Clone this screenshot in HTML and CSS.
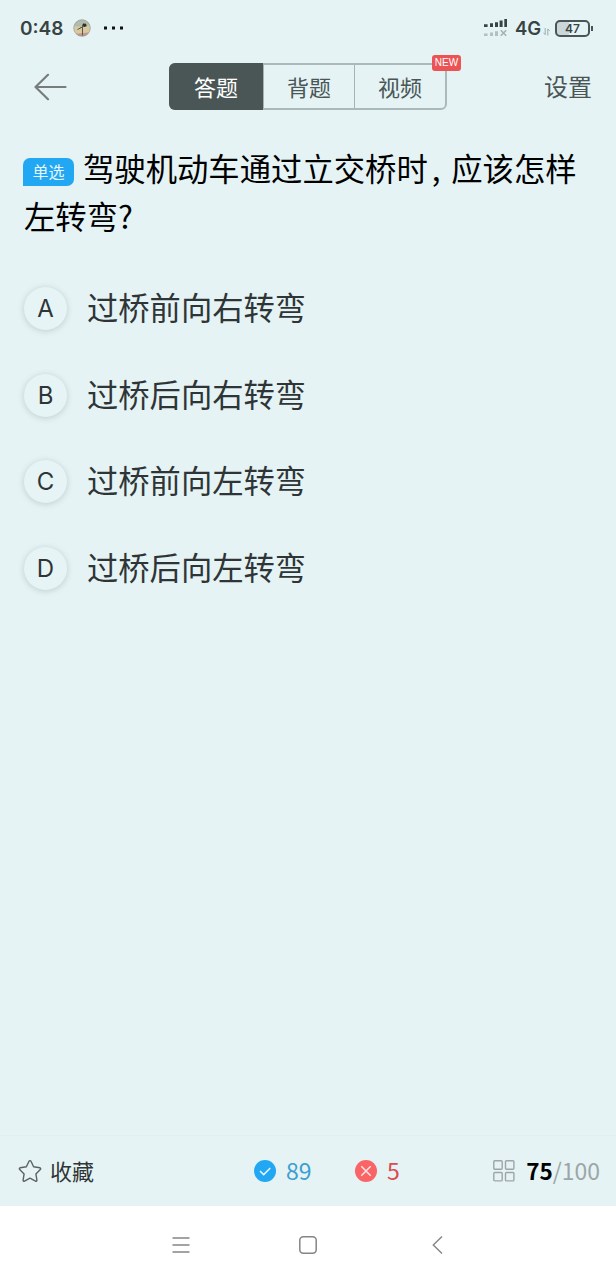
FILE: index.html
```html
<!DOCTYPE html>
<html lang="zh-CN">
<head>
  <meta charset="UTF-8">
  <meta name="viewport" content="width=device-width, initial-scale=1.0">
  <title>答题</title>
  <link rel="stylesheet" href="styles.css">
</head>
<body>
  <div class="status-bar">
    <span class="time">0:48</span>
    <svg class="avatar" width="18" height="18" viewBox="0 0 18 18">
      <circle cx="9" cy="9" r="8.3" fill="#d6c8a0"/>
      <path d="M1 7A8.3 8.3 0 0 1 16.6 6L10 8Z" fill="#aebcae"/>
      <path d="M3 14.8A8.3 8.3 0 0 0 16 13.5L10 14Z" fill="#c09a91"/>
      <path d="M10 4.5l3 .2.6 2.6-2.3.8-2.1-1.2z" fill="#302f2b"/>
      <path d="M9.5 7v9.5M7 9l3-1M4.5 10.5l3-1.5" stroke="#66543e" stroke-width="1" fill="none"/>
      <circle cx="9" cy="9" r="8.3" fill="none" stroke="#8b9188" stroke-width=".6"/>
    </svg>
    <svg class="more" width="22" height="4" viewBox="0 0 22 4">
      <path d="M1 .6h3v3H1zM9 .6h3v3H9zM17 .6h3v3h-3z" fill="#111"/>
    </svg>
    <svg class="signal" width="24" height="18" viewBox="0 0 24 18">
      <path d="M0 5.3h3.6V8H0zM6 4.3h3V8H6zM11 3.2h3V8h-3zM15.6 1.5h3V8h-3zM20.3 0H23v8h-2.7z" fill="#384443"/>
      <path d="M0 14.5h3.6V17H0zM6 13.5h3V17H6zM11 12.3h3V17h-3z" fill="#b4c0c0"/>
      <path d="M16.8 11.3l5.4 5.4M22.2 11.3l-5.4 5.4" stroke="#a6b2b2" stroke-width="1.6"/>
    </svg>
    <span class="network">4G</span>
    <svg class="data" width="7" height="8" viewBox="0 0 8 9">
      <path d="M2.5 0v7.5M.5 5.3l2 2.2M5.5 8.5V1M5.5 1l2 2.2" fill="none" stroke="#9ba8a8" stroke-width="1.1"/>
    </svg>
    <div class="battery">47</div>
  </div>

  <header class="header">
    <svg class="back" width="33" height="28" viewBox="0 0 33 28">
      <path d="M14 1.8L1.5 14l12.500 12.200M1.500 14h30" fill="none" stroke="#777c7d" stroke-width="2.2" stroke-linecap="round" stroke-linejoin="round"/>
    </svg>
    <div class="tabs">
      <div class="tab active">答题</div>
      <div class="tab">背题</div>
      <div class="tab">视频</div>
      <span class="new-badge">NEW</span>
    </div>
    <div class="settings">设置</div>
  </header>

  <main class="content">
    <h1 class="question"><span class="type">单选</span>驾驶机动车通过立交桥时<span class="comma">,</span>应该怎样<br>左转弯?</h1>
    <ul class="options">
      <li><span class="letter">A</span><span class="answer">过桥前向右转弯</span></li>
      <li><span class="letter">B</span><span class="answer">过桥后向右转弯</span></li>
      <li><span class="letter">C</span><span class="answer">过桥前向左转弯</span></li>
      <li><span class="letter">D</span><span class="answer">过桥后向左转弯</span></li>
    </ul>
  </main>

  <footer class="toolbar">
    <div class="favorite">
      <svg width="24" height="24" viewBox="0 0 24 24">
        <path d="M12 1.6c.5 0 .8.3 1 .7l2.6 5.5 6.1.9c1 .2 1.3 1.1.6 1.8l-4.4 4.4 1 6.2c.1.9-.6 1.4-1.4 1L12 19.2l-5.5 2.9c-.8.4-1.5-.1-1.4-1l1-6.2-4.4-4.4c-.7-.7-.4-1.6.6-1.8l6.1-.9L11 2.3c.2-.4.5-.7 1-.7z" fill="none" stroke="#5b6263" stroke-width="1.4" stroke-linejoin="round"/>
      </svg>
      <span>收藏</span>
    </div>
    <div class="score right">
      <svg width="22" height="22" viewBox="0 0 22 22">
        <circle cx="11" cy="11" r="11" fill="#22a7f2"/>
        <path d="M6 11l3.7 3.6 6.6-6.6" fill="none" stroke="#e8f6ff" stroke-width="1.5"/>
      </svg>
      <span>89</span>
    </div>
    <div class="score wrong">
      <svg width="22" height="22" viewBox="0 0 22 22">
        <circle cx="11" cy="11" r="11" fill="#f96467"/>
        <path d="M6.3 6.3l9.4 9.4M15.7 6.3l-9.4 9.4" fill="none" stroke="#ffe4e4" stroke-width="1.5"/>
      </svg>
      <span>5</span>
    </div>
    <div class="progress">
      <svg width="22" height="22" viewBox="0 0 22 22" fill="none" stroke="#9da6a7" stroke-width="1.4">
        <rect x=".8" y=".8" width="8.4" height="8.4" rx="1"/>
        <rect x="12.5" y=".8" width="8.4" height="8.4" rx="1"/>
        <rect x=".8" y="12.5" width="8.4" height="8.4" rx="1"/>
        <rect x="12.5" y="12.5" width="8.4" height="8.4" rx="1"/>
      </svg>
      <span class="current">75</span><span class="total">/100</span>
    </div>
  </footer>

  <nav class="system-nav">
    <svg width="18" height="18" viewBox="0 0 18 18">
      <path d="M.5 2h17M.5 9h17M.5 16h17" stroke="#858585" stroke-width="1.3"/>
    </svg>
    <svg class="home" width="18" height="18" viewBox="0 0 18 18">
      <rect x=".8" y=".8" width="16.4" height="16.4" rx="3.5" fill="none" stroke="#858585" stroke-width="1.5"/>
    </svg>
    <svg width="11" height="18" viewBox="0 0 11 18">
      <path d="M10 .5L1.3 9l8.7 8.5" fill="none" stroke="#858585" stroke-width="1.4"/>
    </svg>
  </nav>
</body>
</html>
```
FILE: styles.css
```css
* {
  box-sizing: border-box;
}

body {
  display: flex;
  flex-direction: column;
  height: 1280px;
  margin: 0;
  background-color: #e5f3f5;
  color: #2f3536;
  font-family: "Noto Sans CJK SC", sans-serif;
}

svg {
  flex: none;
}

/* Status bar */
.status-bar {
  display: flex;
  align-items: center;
  height: 56px;
  padding: 0 22px 0 20px;
  font-family: Inter, sans-serif;
  color: #384443;
}

.time {
  width: 53px;
  font-size: 19px;
  font-weight: 600;
}

.more {
  margin-left: 12px;
}

.signal {
  margin-left: auto;
}

.network {
  width: 27px;
  margin-left: 7px;
  font-size: 18.5px;
  font-weight: 600;
}

.data {
  margin: 7px 5px 0 1px;
}

.battery {
  position: relative;
  width: 35px;
  height: 17px;
  margin-right: 4px;
  border: 2px solid #4a5655;
  border-radius: 5px;
  background: linear-gradient(90deg, #cbd6da 40%, transparent 40%);
  font-size: 12px;
  font-weight: 600;
  line-height: 13px;
  text-align: center;
}

.battery::after {
  content: "";
  position: absolute;
  top: 4px;
  right: -5px;
  width: 2px;
  height: 5px;
  background-color: #4a5655;
}

/* Header */
.header {
  display: flex;
  align-items: center;
  height: 61px;
  padding: 0 24px 0 34px;
  font-size: 22px;
  color: #4a5655;
}

.tabs {
  position: relative;
  display: flex;
  width: 278px;
  height: 47px;
  margin-left: 102px;
  border: 2px solid #aab9b9;
  border-radius: 6px;
}

.tab {
  flex: 1;
  border-left: 1px solid #a4b3b3;
  line-height: 42px;
  text-align: center;
}

.tab.active {
  flex: none;
  width: 94px;
  margin: -2px 0 -2px -2px;
  border: 0;
  border-radius: 6px 0 0 6px;
  background-color: #4a5655;
  color: #fff;
  line-height: 46px;
}

.new-badge {
  position: absolute;
  top: -10px;
  right: -16px;
  width: 29px;
  height: 16px;
  border-radius: 3px;
  background-color: #ec5355;
  color: #fff;
  font-family: "Liberation Sans", sans-serif;
  font-size: 10px;
  line-height: 16px;
  text-align: center;
}

.settings {
  margin: -3px 0 0 auto;
  font-size: 24px;
}

/* Question */
.content {
  flex: 1;
  padding: 27px 24px 0;
}

.question {
  margin: 0;
  color: #000;
  font-size: 31.35px;
  font-weight: 400;
  line-height: 48px;
  white-space: nowrap;
}

.type {
  display: inline-block;
  width: 51px;
  height: 28px;
  margin: 0 9px 0 -1px;
  border-radius: 7px 7px 7px 0;
  background-color: #22a7f2;
  color: #e8f6ff;
  font-size: 16px;
  line-height: 27px;
  text-align: center;
  vertical-align: 3px;
}

.comma {
  display: inline-block;
  width: 23.5px;
  padding-left: 4px;
}

.options {
  margin: 0;
  padding: 25px 0 0;
  list-style: none;
}

.options li {
  display: flex;
  align-items: center;
  height: 86.8px;
  font-size: 31.3px;
}

.letter {
  width: 43px;
  height: 43px;
  margin: 0 20px 0 0;
  border-radius: 50%;
  background-color: #e7f4f6;
  box-shadow: 0 1px 6px rgba(60, 80, 80, 0.23);
  font-family: Inter, sans-serif;
  font-size: 24px;
  line-height: 43px;
  text-align: center;
}

.answer {
  padding-bottom: 4px;
}

/* Bottom toolbar */
.toolbar {
  display: flex;
  align-items: center;
  height: 71px;
  padding: 0 16px 0 18px;
  border-top: 1px solid #e1eff1;
  font-size: 23px;
}

.toolbar div {
  display: flex;
  align-items: center;
}

.toolbar span {
  padding-bottom: 2px;
}

.favorite {
  width: 236px;
  gap: 8px;
  font-size: 22px;
}

.score {
  gap: 10px;
}

.right {
  width: 101px;
  color: #3c9fd2;
}

.wrong {
  color: #dc4b4d;
}

.progress {
  margin-left: auto;
}

.current {
  margin-left: 11px;
  color: #000;
  font-size: 22.5px;
  font-weight: 700;
}

.total {
  color: #9da6a7;
}

/* System navigation */
.system-nav {
  display: flex;
  align-items: center;
  height: 74px;
  padding: 3px 173px 0 172px;
  background-color: #fff;
}

.home {
  margin: 0 auto 0 109px;
}
```
